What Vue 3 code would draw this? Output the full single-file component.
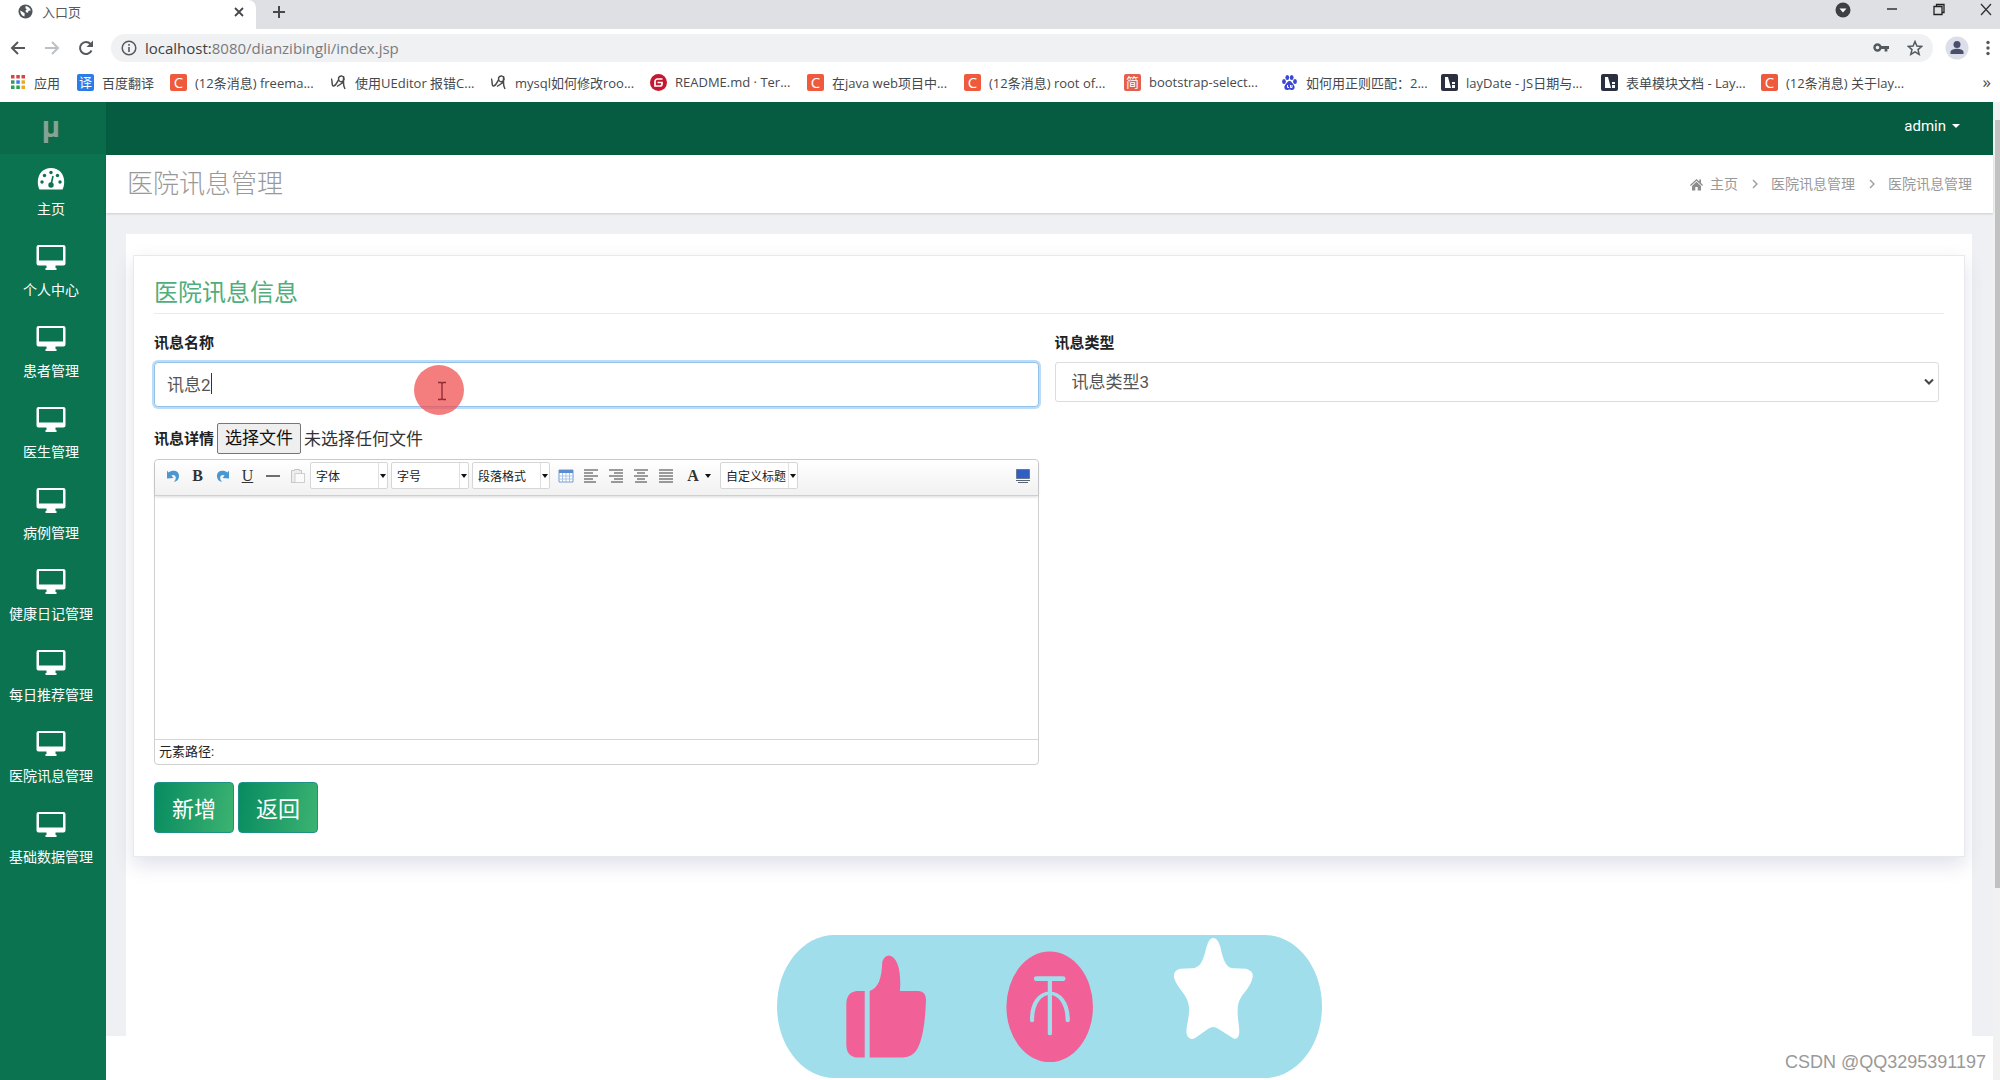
<script setup>
import { ref } from 'vue'

const bookmarks = [
  { icon: 'csdn', text: '(12条消息) freema...' },
  { icon: 'pen', text: '使用UEditor 报错C...' },
  { icon: 'pen', text: 'mysql如何修改roo...' },
  { icon: 'gitee', text: 'README.md · Ter...', narrow: true },
  { icon: 'csdn', text: '在java web项目中...', narrow: true },
  { icon: 'csdn', text: '(12条消息) root of...' },
  { icon: 'jian', text: 'bootstrap-select...', narrow: true },
  { icon: 'paw', text: '如何用正则匹配：2...' },
  { icon: 'lay', text: 'layDate - JS日期与...' },
  { icon: 'lay', text: '表单模块文档 - Lay...' },
  { icon: 'csdn', text: '(12条消息) 关于lay...' }
]

const menu = [
  '个人中心',
  '患者管理',
  '医生管理',
  '病例管理',
  '健康日记管理',
  '每日推荐管理',
  '医院讯息管理',
  '基础数据管理'
]

const name = ref('讯息2')
const kind = ref('讯息类型3')
const fileInput = ref(null)
const aligns = [
  { title: '左对齐', d: 'M1 2h14M1 5h9M1 8h14M1 11h9M1 14h12' },
  { title: '右对齐', d: 'M1 2h14M6 5h9M1 8h14M6 11h9M3 14h12' },
  { title: '居中', d: 'M1 2h14M4 5h8M1 8h14M4 11h8M2 14h12' },
  { title: '两端对齐', d: 'M1 2h14M1 5h14M1 8h14M1 11h14M1 14h14' }
]
</script>

<template>
  <div class="browser">
    <header class="chrome">
      <div class="tabs">
        <div class="tab">
          <svg class="favicon" viewBox="0 0 16 16">
            <circle cx="8" cy="8" r="7.5" fill="#50555b" />
            <path d="M8 2.2c3 .2 5 2.300 5.600 4.600l-2.300.4-.8 2-2-.4-.6-1.600 1.500-1.400-1.400-1.200zM2.400 7l3.200 1.800 1.600 1.200-.4 3.400C4 12.600 2.300 10 2.400 7z" fill="#fff" />
          </svg>
          <span class="tab-title">入口页</span>
          <button class="plain tab-close" aria-label="关闭">
            <svg width="10" height="10" viewBox="0 0 10 10"><path d="M1 1l8 8M9 1l-8 8" stroke="#45494d" stroke-width="1.8" /></svg>
          </button>
        </div>
        <button class="plain new-tab" aria-label="新标签页">
          <svg width="14" height="14" viewBox="0 0 14 14"><path d="M7 1v12M1 7h12" stroke="#45494d" stroke-width="2" /></svg>
        </button>
        <div class="window-controls">
          <button class="plain" aria-label="搜索标签页">
            <svg width="16" height="16" viewBox="0 0 16 16"><circle cx="8" cy="8" r="7.5" fill="#3c4043" /><path d="M4.500 6.500h7L8 10.500z" fill="#fff" /></svg>
          </button>
          <button class="plain" aria-label="最小化">
            <svg width="12" height="16" viewBox="0 0 12 16"><path d="M1 7h10" stroke="#333" stroke-width="1.500" /></svg>
          </button>
          <button class="plain" aria-label="还原">
            <svg width="12" height="16" viewBox="0 0 12 16"><path d="M1 4.500h8v8h-8zM3.500 4.500v-2h7.500v8h-2" fill="none" stroke="#222" stroke-width="1.300" /></svg>
          </button>
          <button class="plain" aria-label="关闭窗口">
            <svg width="12" height="16" viewBox="0 0 12 16"><path d="M1 2l10 11M11 2L1 13" stroke="#333" stroke-width="1.300" /></svg>
          </button>
        </div>
      </div>

      <div class="toolbar">
        <button class="plain" aria-label="后退">
          <svg width="18" height="18" viewBox="0 0 18 18"><path d="M16 9H3M9 3L3 9l6 6" fill="none" stroke="#55595e" stroke-width="2" /></svg>
        </button>
        <button class="plain" aria-label="前进">
          <svg width="18" height="18" viewBox="0 0 18 18"><path d="M2 9h13M9 3l6 6-6 6" fill="none" stroke="#bdc0c4" stroke-width="2" /></svg>
        </button>
        <button class="plain" aria-label="重新加载">
          <svg width="18" height="18" viewBox="0 0 18 18"><path d="M14.500 11.500A6 6 0 1 1 13.500 5" fill="none" stroke="#55595e" stroke-width="2" /><path d="M16 1.500v6.500h-6.500z" fill="#55595e" /></svg>
        </button>
        <div class="address">
          <svg width="16" height="16" viewBox="0 0 16 16"><circle cx="8" cy="8" r="6.800" fill="none" stroke="#55595e" stroke-width="1.500" /><path d="M8 7v5M8 4v1.700" stroke="#55595e" stroke-width="1.600" /></svg>
          <span class="url"><span class="host">localhost:</span>8080/dianzibingli/index.jsp</span>
          <svg class="key" width="16" height="16" viewBox="0 0 16 16"><circle cx="4.500" cy="7.500" r="3" fill="none" stroke="#55595e" stroke-width="2.400" /><path d="M7.500 7.500H16M13 8v3.500" stroke="#55595e" stroke-width="2.800" /></svg>
          <svg width="16" height="16" viewBox="0 0 16 16"><path d="M8 1.500l1.900 4.500 4.800.4-3.700 3.200 1.200 4.800L8 11.800l-4.200 2.600L5 9.600 1.300 6.400 6.100 6z" fill="none" stroke="#55595e" stroke-width="1.500" /></svg>
        </div>
        <button class="plain" aria-label="用户">
          <svg width="24" height="24" viewBox="0 0 24 24"><circle cx="12" cy="12" r="11.500" fill="#dcdfe9" /><circle cx="12" cy="8.500" r="3.500" fill="#4b4f6d" /><path d="M5.500 18v-2c0-2 4-3.200 6.500-3.200s6.500 1.200 6.500 3.200v2z" fill="#4b4f6d" /></svg>
        </button>
        <button class="plain dots" aria-label="菜单">
          <svg width="6" height="16" viewBox="0 0 6 16"><g fill="#55595e"><circle cx="3" cy="2.500" r="1.700" /><circle cx="3" cy="8" r="1.700" /><circle cx="3" cy="13.500" r="1.700" /></g></svg>
        </button>
      </div>

      <nav class="bookmarks">
        <a href="#" class="bookmark apps">
          <svg width="16" height="16" viewBox="0 0 16 16">
            <path d="M1 1h3.500v3.500H1zM6.300 1h3.500v3.500H6.300zM11.500 1H15v3.500h-3.500z" fill="#d9463d" />
            <path d="M1 6.300h3.500v3.500H1z" fill="#2e9e55" /><path d="M6.300 6.300h3.500v3.500H6.300z" fill="#3b7ded" /><path d="M11.500 6.300H15v3.500h-3.500z" fill="#e5a92b" />
            <path d="M1 11.500h3.500V15H1zM6.300 11.500h3.500V15H6.300z" fill="#2e9e55" /><path d="M11.500 11.500H15V15h-3.500z" fill="#e5a92b" />
          </svg>
          <span>应用</span>
        </a>
        <a href="#" class="bookmark baidu"><span class="chip blue">译</span><span>百度翻译</span></a>
        <a v-for="(b, i) in bookmarks" :key="i" href="#" class="bookmark fixed" :class="{ narrow: b.narrow }">
          <span v-if="b.icon === 'csdn'" class="chip orange">C</span>
          <span v-else-if="b.icon === 'jian'" class="chip red">简</span>
          <span v-else-if="b.icon === 'gitee'" class="chip round">
            <svg width="17" height="17" viewBox="0 0 17 17"><path d="M12.500 5H7.500A2.500 2.500 0 0 0 5 7.500V12h5a2 2 0 0 0 2-2V8.500H7.500" fill="none" stroke="#fff" stroke-width="1.700" /></svg>
          </span>
          <span v-else-if="b.icon === 'lay'" class="chip dark">
            <svg width="17" height="17" viewBox="0 0 17 17"><path d="M4 3h3l3 11H4zM11 8h3v2h-3zM11 11h3v3h-3z" fill="#fff" /></svg>
          </span>
          <svg v-else-if="b.icon === 'pen'" width="17" height="17" viewBox="0 0 17 17"><path d="M1 5c2 0 0 7 2.500 7S7 8 8.500 6M8.500 5a2.800 2.800 0 1 1 5 1.500c-1.500 2-5 1.500-5-1.500zM13.500 2v7c0 2 .5 4 1.500 6M7 12.500l6-4" fill="none" stroke="#4a4a4a" stroke-width="1.500" /></svg>
          <svg v-else width="17" height="17" viewBox="0 0 17 17"><g fill="#3b48d6"><ellipse cx="3" cy="7.500" rx="1.900" ry="2.500" /><ellipse cx="6.300" cy="3.500" rx="1.900" ry="2.600" /><ellipse cx="10.700" cy="3.500" rx="1.900" ry="2.600" /><ellipse cx="14" cy="7.500" rx="1.900" ry="2.500" /><path d="M8.500 7c2 0 2.500 2 4 3.500s2 5-1.500 5.500c-1.500 0-1.500-.5-2.500-.5s-1 .5-2.500.5c-3.500-.5-3-4-1.500-5.500s2-3.500 4-3.500z" /></g><path d="M6.500 11v2.500h1.500M9.500 11v2.500h1.500V11" fill="none" stroke="#fff" /></svg>
          <span>{{ b.text }}</span>
        </a>
        <button class="plain more" aria-label="更多书签">»</button>
      </nav>
    </header>

    <div class="page">
      <aside class="sidebar">
        <a href="#" class="brand">µ</a>
        <a href="#" class="item">
          <svg width="28" height="28" viewBox="0 0 28 28">
            <path d="M.8 18C.8 9.500 6.500 4 14 4s13.200 5.500 13.200 14c0 2.600-.5 5-1.700 7.500H2.500C1.300 23 .8 20.600.8 18z" fill="#fff" />
            <g fill="#0b7350"><circle cx="5" cy="18" r="1.700" /><circle cx="7.500" cy="11.500" r="1.700" /><circle cx="14" cy="8.500" r="1.700" /><circle cx="20.500" cy="11.500" r="1.700" /><circle cx="23" cy="18" r="1.700" /><circle cx="14" cy="21" r="2.700" /></g>
            <path d="M14 21l2-9" stroke="#0b7350" stroke-width="1.600" />
          </svg>
          <span>主页</span>
        </a>
        <a v-for="m in menu" :key="m" href="#" class="item">
          <svg width="30" height="28" viewBox="0 0 30 28">
            <path fill-rule="evenodd" d="M2.500 0h25A2 2 0 0 1 29.500 2v16.500a2 2 0 0 1-2 2H19.500V23h1v2h-11v-2h1v-2.500h-8a2 2 0 0 1-2-2V2a2 2 0 0 1 2-2zM3 2v13.500h24V2z" fill="#fff" />
          </svg>
          <span>{{ m }}</span>
        </a>
      </aside>

      <main class="main">
        <div class="navbar"><button class="plain admin">admin<i class="caret"></i></button></div>
        <div class="heading">
          <h1>医院讯息管理</h1>
          <nav class="crumbs">
            <a href="#"><svg width="13" height="13" viewBox="0 0 13 13"><path d="M6.500 1L0 7l.8.9L6.500 2.800 12.200 7.900 13 7l-2-1.900V1.500H9.300v2zM6.500 3.800L2 8v4.500h3.300V9h2.400v3.500H11V8z" fill="#8d8d8d" /></svg>主页</a>
            <svg class="sep" width="6" height="10" viewBox="0 0 6 10"><path d="M1 1l4 4-4 4" fill="none" stroke="#999" stroke-width="1.300" /></svg>
            <a href="#">医院讯息管理</a>
            <svg class="sep" width="6" height="10" viewBox="0 0 6 10"><path d="M1 1l4 4-4 4" fill="none" stroke="#999" stroke-width="1.300" /></svg>
            <span>医院讯息管理</span>
          </nav>
        </div>

        <div class="content">
          <div class="panel">
            <form class="card" @submit.prevent>
              <h2>医院讯息信息</h2>
              <div class="fields">
                <div class="field">
                  <label for="news-name">讯息名称</label>
                  <div class="input-wrap">
                    <input id="news-name" v-model="name" class="text" type="text" />
                    <span class="text-caret"></span>
                    <span class="pointer">
                      <svg width="10" height="20" viewBox="0 0 10 20"><path d="M1 1.500h3l1 1 1-1h3M1 18.500h3l1-1 1 1h3M5 2.500v15" fill="none" stroke="#8c2a35" stroke-width="1.300" /></svg>
                    </span>
                  </div>
                </div>
                <div class="field">
                  <label for="news-type">讯息类型</label>
                  <div class="select-wrap">
                    <select id="news-type" v-model="kind">
                      <option>讯息类型3</option>
                    </select>
                    <svg class="chevron" width="10" height="8" viewBox="0 0 10 8"><path d="M1 1.500l4 4 4-4" fill="none" stroke="#444" stroke-width="2" /></svg>
                  </div>
                </div>
                <div class="field">
                  <div class="file-row">
                    <label for="news-file">讯息详情</label>
                    <input id="news-file" ref="fileInput" type="file" hidden />
                    <button type="button" class="choose" @click="fileInput.click()">选择文件</button>
                    <span>未选择任何文件</span>
                  </div>
                  <div class="editor">
                    <div class="tools">
                      <button type="button" class="tool" title="撤销"><svg width="16" height="16" viewBox="0 0 16 16"><path d="M2 2.500l1.500 2C7 1.500 14.500 2 14 8.500c-.2 3-2 5-5 5.500 2.500-3 2.500-7-1-7-.7 0-1 .2-1.500.6L8.500 10 2 10.500z" fill="#4a97d2" /></svg></button>
                      <button type="button" class="tool letter" title="加粗">B</button>
                      <button type="button" class="tool" title="重做"><svg width="16" height="16" viewBox="0 0 16 16"><path d="M14 2.500l-1.500 2C9 1.500 1.500 2 2 8.500c.2 3 2 5 5 5.500-2.500-3-2.500-7 1-7 .7 0 1 .2 1.500.6L7.500 10l6.500.5z" fill="#4a97d2" /></svg></button>
                      <button type="button" class="tool letter under" title="下划线">U</button>
                      <button type="button" class="tool" title="分隔线"><svg width="16" height="16" viewBox="0 0 16 16"><path d="M1 8h14" stroke="#333" stroke-width="1.400" /></svg></button>
                      <button type="button" class="tool" title="粘贴"><svg width="16" height="16" viewBox="0 0 16 16"><path d="M1.500 2.500h3v-1h5v1h2v3h3v9h-13z" fill="#ededed" stroke="#c4c4c4" /><path d="M5 5.500h9.500v9H5z" fill="#fafafa" stroke="#cfcfcf" /></svg></button>
                      <button type="button" class="combo"><span>字体</span><i></i></button>
                      <button type="button" class="combo"><span>字号</span><i></i></button>
                      <button type="button" class="combo"><span>段落格式</span><i></i></button>
                      <button type="button" class="tool" title="表格"><svg width="16" height="14" viewBox="0 0 16 14"><path d="M1 1h14v12H1z" fill="#fff" stroke="#6f9ad3" /><path d="M1 1h14v3H1z" fill="#5b8bd0" /><path d="M1 7h14M1 10h14M4.500 4v9M8 4v9M11.500 4v9" stroke="#a9c3e6" /></svg></button>
                      <button v-for="a in aligns" :key="a.title" type="button" class="tool" :title="a.title"><svg width="16" height="16" viewBox="0 0 16 16"><path :d="a.d" stroke="#3c3c3c" stroke-width="1.200" /></svg></button>
                      <button type="button" class="tool letter color" title="字体颜色">A<i class="arrow"></i></button>
                      <button type="button" class="combo"><span>自定义标题</span><i></i></button>
                      <button type="button" class="tool full" title="全屏"><svg width="16" height="16" viewBox="0 0 16 16"><path d="M1.500 1.500h13v9h-13z" fill="#2f5fc4" stroke="#6b7890" /><path d="M1 12.500h14M3 14.500h10" stroke="#5b6472" stroke-width="1.200" /></svg></button>
                    </div>
                    <div class="body" contenteditable="true" role="textbox" aria-label="讯息详情"></div>
                    <div class="path">元素路径:</div>
                  </div>
                </div>
              </div>
              <div class="actions">
                <button type="submit" class="btn">新增</button>
                <button type="button" class="btn">返回</button>
              </div>
            </form>
          </div>
        </div>

        <div class="reactions">
          <svg width="545" height="143" viewBox="45 73 1423 427" preserveAspectRatio="none">
            <path d="M195 73H1318C1400 73 1468 168 1468 286.500S1400 500 1318 500H195C113 500 45 405 45 286.500S113 73 195 73z" fill="#a0deec" />
            <path d="M274 240V439H254Q226 436 226 400V280Q226 243 254 240zM287 240C310 230 318 205 320 152Q326 134 337 134C360 138 370 180 366 240H415Q434 242 434 266C432 340 424 385 412 412Q400 438 374 439H287z" fill="#f16096" />
            <ellipse cx="757" cy="287.500" rx="113" ry="165" fill="#f16096" />
            <g fill="none" stroke="#a0deec" stroke-linecap="round">
              <path d="M723 203.500h68" stroke-width="14" />
              <path d="M757.500 208V367" stroke-width="11" />
              <path d="M711 328C709 220 805 220 804 328" stroke-width="11" />
            </g>
            <path d="M1184 82Q1196 82 1203 110C1211 155 1220 172 1238 172L1270 174Q1292 181 1286 204C1275 244 1252 250 1248 290C1246 320 1253 345 1252 366Q1250 387 1237 382L1197 353Q1184 342 1171 353L1135 382Q1118 388 1114 366C1113 345 1122 320 1121 290C1118 250 1092 236 1082 202Q1078 180 1098 174L1130 172C1150 170 1158 150 1166 110Q1173 82 1184 82z" fill="#fff" />
          </svg>
        </div>
        <div class="watermark">CSDN @QQ3295391197</div>
      </main>

      <div class="scrollbar"><div class="thumb"></div></div>
    </div>
  </div>
</template>

<style>
body {
  background: #fff;
}
</style>

<style scoped>
.browser,
.browser * {
  box-sizing: border-box;
}
.browser {
  display: flex;
  flex-direction: column;
  min-height: 100vh;
  font-family: Roboto, "Noto Sans CJK SC", sans-serif;
  font-size: 14px;
  color: #333;
}
button,
input,
select {
  font-family: inherit;
}
a {
  color: inherit;
  text-decoration: none;
}
svg {
  display: block;
  flex: none;
}
.plain {
  display: flex;
  align-items: center;
  padding: 0;
  border: 0;
  background: none;
}

/* browser chrome */
.chrome {
  font-family: "Open Sans", "Noto Sans CJK SC", sans-serif;
}
.tabs {
  display: flex;
  align-items: flex-start;
  height: 29px;
  background: #dee0e4;
}
.tab {
  display: flex;
  align-items: center;
  width: 256px;
  height: 29px;
  padding: 0 12px 6px 18px;
  background: #fff;
  border-radius: 0 8px 0 0;
}
.favicon {
  width: 15px;
  height: 15px;
}
.tab-title {
  margin-left: 9px;
  font-size: 13px;
  line-height: 20px;
  color: #55595e;
}
.tab-close {
  margin-left: auto;
}
.new-tab {
  height: 24px;
  margin-left: 16px;
}
.window-controls {
  display: flex;
  gap: 35px;
  height: 20px;
  margin-left: auto;
  padding-right: 8px;
}
.toolbar {
  display: flex;
  align-items: center;
  height: 40px;
  padding: 0 9px 2px;
}
.toolbar > .plain + .plain {
  margin-left: 16px;
}
.address {
  display: flex;
  flex: 1;
  align-items: center;
  height: 28px;
  margin: 0 12px 0 16px;
  padding: 0 10px;
  border-radius: 14px;
  background: #f0f1f3;
}
.url {
  margin-left: 8px;
  font-size: 15px;
  line-height: 20px;
  color: #777b80;
}
.host {
  color: #3c4043;
}
.key {
  margin-left: auto;
  margin-right: 18px;
}
.toolbar > .dots {
  margin-left: 19px;
}
.bookmarks {
  display: flex;
  align-items: center;
  height: 33px;
  padding: 0 9px 7px 10px;
  font-size: 13px;
  color: #45494d;
}
.bookmark {
  display: flex;
  align-items: center;
  gap: 8px;
  height: 20px;
  white-space: nowrap;
}
.apps {
  width: 67px;
}
.baidu {
  width: 93px;
}
.fixed {
  width: 160px;
}
.narrow {
  width: 157px;
}
.chip {
  flex: none;
  width: 17px;
  height: 17px;
  border-radius: 2px;
  color: #fff;
  text-align: center;
  font-size: 13px;
  line-height: 17px;
}
.blue {
  background: #2a7de8;
}
.orange {
  background: #ef5a3c;
  font-size: 15px;
}
.red {
  background: #e2604f;
}
.round {
  border-radius: 50%;
  background: #c3182f;
}
.dark {
  background: #2b3040;
}
.more {
  margin-left: auto;
  font-size: 17px;
  line-height: 20px;
  color: #45494d;
}

/* application */
.page {
  display: flex;
  flex: 1;
}
.sidebar {
  flex: none;
  width: 106px;
  background: #0b7350;
  color: #fff;
}
.brand {
  display: block;
  height: 52px;
  padding-right: 4px;
  background: #0a6b4b;
  color: #86a296;
  text-align: center;
  font-size: 30px;
  font-weight: 700;
  line-height: 50px;
}
.item {
  display: flex;
  flex-direction: column;
  align-items: center;
  height: 81px;
  padding: 10px 4px 0 0;
  font-size: 14px;
  line-height: 20px;
  white-space: nowrap;
}
.item span {
  margin-top: 7px;
}
.main {
  position: relative;
  flex: 1;
  min-width: 0;
}
.navbar {
  display: flex;
  justify-content: flex-end;
  height: 53px;
  padding: 0 33px 5px 0;
  background: #065c40;
}
.admin {
  gap: 6px;
  color: #fff;
  font-size: 15px;
}
.caret {
  border: 4px solid transparent;
  border-top-color: #fff;
  border-bottom: 0;
}
.heading {
  display: flex;
  align-items: center;
  justify-content: space-between;
  height: 58px;
  padding: 0 21px 0 21px;
  box-shadow: 0 1px 2px rgba(0, 0, 0, 0.15);
  position: relative;
}
h1 {
  margin: 0;
  font-size: 26px;
  font-weight: 300;
  line-height: 38px;
  color: #999;
}
.crumbs {
  display: flex;
  align-items: center;
  font-size: 14px;
  line-height: 20px;
  color: #999;
}
.crumbs a {
  display: flex;
  align-items: center;
  gap: 7px;
}
.sep {
  margin: 0 13px 0 14px;
}
.content {
  padding: 21px 21px 0 20px;
  background: #eff0f3;
}
.panel {
  padding: 21px 7px 179px;
  background: #fff;
}
.card {
  padding: 20px 20px 23px;
  border: 1px solid #e8e9ec;
  background: #fff;
  box-shadow: 0 8px 18px rgba(60, 70, 130, 0.16);
}
h2 {
  margin: 0;
  padding-bottom: 3px;
  border-bottom: 1px solid #ebebeb;
  font-size: 24px;
  font-weight: 400;
  line-height: 34px;
  color: #4fae7b;
}
.fields {
  display: grid;
  grid-template-columns: 1fr 1fr;
  column-gap: 16px;
  row-gap: 16px;
  padding: 18px 5px 0 0;
}
.field {
  min-width: 0;
}
label {
  display: block;
  margin-bottom: 8px;
  font-size: 15px;
  font-weight: 700;
  line-height: 22px;
  color: #222;
}
.input-wrap,
.select-wrap {
  position: relative;
}
.text {
  display: block;
  width: 100%;
  height: 45px;
  padding: 0 12px 2px;
  border: 1px solid #92c1ea;
  border-radius: 4px;
  outline: 0;
  box-shadow: 0 0 0 2px #bcdcf7;
  font-size: 17px;
  color: #555;
}
.text-caret {
  position: absolute;
  left: 57px;
  top: 11px;
  width: 1px;
  height: 21px;
  background: #333;
}
.pointer {
  position: absolute;
  left: 260px;
  top: 3px;
  display: flex;
  align-items: center;
  justify-content: center;
  width: 50px;
  height: 50px;
  padding: 2px 0 0 5px;
  border-radius: 50%;
  background: rgba(240, 80, 80, 0.74);
}
select {
  display: block;
  width: 100%;
  height: 40px;
  padding: 0 16px;
  border: 1px solid #dcdcdc;
  border-radius: 3px;
  background: #fff;
  appearance: none;
  font-size: 17px;
  color: #555;
}
.chevron {
  position: absolute;
  right: 5px;
  top: 16px;
}
.file-row {
  display: flex;
  align-items: center;
  gap: 3px;
  height: 31px;
  margin-bottom: 5px;
  font-size: 17px;
  line-height: 24px;
  color: #333;
}
.file-row label {
  margin: 0;
}
.choose {
  height: 31px;
  padding: 0 7px;
  border: 1px solid #767676;
  border-radius: 2px;
  background: #efefef;
  font-size: 17px;
  line-height: 27px;
  color: #111;
}
.editor {
  border: 1px solid #d0d0d0;
  border-radius: 4px;
}
.tools {
  display: flex;
  align-items: center;
  height: 36px;
  padding: 0 6px 4px 5px;
  border-bottom: 1px solid #cfcfcf;
  border-radius: 4px 4px 0 0;
  background: linear-gradient(#fff, #f1f1f1);
  box-shadow: 0 1px 3px rgba(0, 0, 0, 0.15);
}
.tool {
  display: flex;
  align-items: center;
  justify-content: center;
  flex: none;
  width: 25px;
  height: 24px;
  padding: 0;
  border: 0;
  background: none;
  color: #333;
}
.letter {
  font-family: "Liberation Serif", serif;
  font-size: 16px;
  font-weight: 700;
}
.under {
  font-weight: 400;
  text-decoration: underline;
}
.color {
  gap: 6px;
  width: 42px;
}
.arrow {
  border: 3px solid transparent;
  border-top: 4px solid #111;
  border-bottom: 0;
}
.combo {
  display: flex;
  align-items: center;
  flex: none;
  width: 78px;
  height: 27px;
  margin-right: 3px;
  padding: 0 0 0 5px;
  border: 1px solid #d6d6d6;
  border-radius: 2px;
  background: #fff;
  font-size: 12px;
  color: #222;
}
.combo span {
  flex: 1;
  text-align: left;
  white-space: nowrap;
}
.combo i {
  display: flex;
  align-items: center;
  justify-content: center;
  width: 9px;
  height: 25px;
  border-left: 1px solid #e0e0e0;
}
.combo i::after {
  content: "";
  border: 3px solid transparent;
  border-top: 4px solid #111;
  border-bottom: 0;
}
.full {
  width: 18px;
  margin-left: auto;
}
.body {
  height: 243px;
  outline: 0;
}
.path {
  height: 25px;
  padding-left: 4px;
  border-top: 1px solid #d6d6d6;
  font-size: 13px;
  line-height: 24px;
  color: #222;
}
.actions {
  display: flex;
  gap: 4px;
  margin-top: 17px;
}
.btn {
  width: 80px;
  height: 51px;
  padding: 0 0 2px;
  border: 1px solid #1d9187;
  border-radius: 4px;
  background: linear-gradient(100deg, #078b60, #3cb371);
  color: #fff;
  font-size: 22px;
}
.reactions {
  position: absolute;
  left: 0;
  right: 0;
  bottom: 2px;
  display: flex;
  justify-content: center;
}
.watermark {
  position: absolute;
  right: 7px;
  bottom: 6px;
  font-family: "Liberation Sans", sans-serif;
  font-size: 18px;
  line-height: 24px;
  color: #999;
}
.scrollbar {
  flex: none;
  width: 7px;
  padding: 18px 0 0 2px;
  background: #f1f1f1;
}
.thumb {
  height: 80%;
  background: #c1c1c1;
}
</style>
